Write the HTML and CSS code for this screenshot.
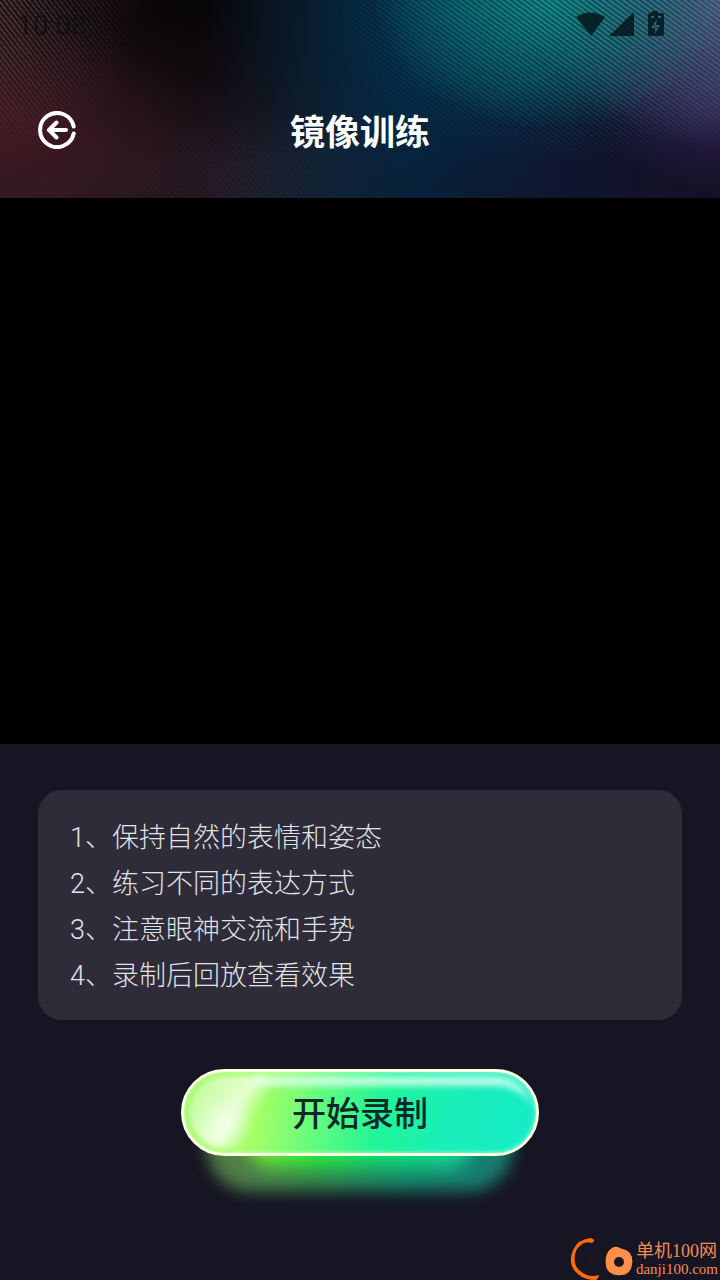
FILE: index.html
```html
<!DOCTYPE html>
<html lang="zh-CN">
<head>
    <meta charset="UTF-8">
    <meta name="viewport" content="width=device-width, initial-scale=1.0">
    <title>镜像训练</title>
    <link rel="stylesheet" href="styles.css">
</head>
<body>
    <header class="header">
        <div class="status-bar">
            <span>10:08</span>
            <svg class="status-icons" width="90" height="28" viewBox="0 0 90 28">
                <path d="M1 6Q15-3 30 6L16 25Z"/>
                <path d="M34 25L59 1V25Z"/>
                <path fill-rule="evenodd" d="M77 0h6v2h4q2 0 2 2v19q0 2-2 2H75q-2 0-2-2V4q0-2 2-2h2ZM82 8l-6 9h4v6l5-9h-4ZM76 5v2h3V5ZM83 5v2h3V5Z"/>
            </svg>
        </div>
        <div class="nav">
            <button class="back" aria-label="返回">
                <svg width="38" height="38" viewBox="0 0 38 38">
                    <path d="M35.700 15.500A17 17 0 1 0 35.700 22.500M28 19H12M18.500 11.500L11 19l7.500 7.500"/>
                </svg>
            </button>
            <h1>镜像训练</h1>
        </div>
    </header>

    <video class="preview"></video>

    <main class="content">
        <div class="tips">
            <p>1、保持自然的表情和姿态</p>
            <p>2、练习不同的表达方式</p>
            <p>3、注意眼神交流和手势</p>
            <p>4、录制后回放查看效果</p>
        </div>
        <button class="record">
            <span class="record-face"><span class="record-text">开始录制</span></span>
        </button>
    </main>

    <footer class="site">
        <svg width="64" height="42" viewBox="0 0 64 42">
            <circle cx="20" cy="21" r="14" fill="none" stroke="#1c1718" stroke-width="2"/>
            <path d="M15 21h10M20 16v10" stroke="#1c1718" stroke-width="2"/>
            <path d="M20 0Q7 1 2 12Q-4 27 7 36Q13 42 25 42Q28 40 28 37Q22 39 16 37Q6 33 4 25Q2 13 10 7Q14 3 20 5Q25 4 22 1Z" fill="#ff6a0a"/>
            <path d="M39 11Q44 6 50 10Q62 12 62 24Q61 38 48 38Q34 37 34 24Q34 15 39 11Z" fill="#ff8f4a" stroke="#17110f" stroke-width="1"/>
            <circle cx="48" cy="24" r="5" fill="#191820"/>
        </svg>
        <div>
            <p class="site-name">单机100网</p>
            <a href="#">danji100.com</a>
        </div>
    </footer>
</body>
</html>
```
FILE: styles.css
```css
* {
    box-sizing: border-box;
}

body {
    margin: 0;
    min-height: 100vh;
    display: flex;
    flex-direction: column;
    background: #161523;
    color: #fff;
    font-family: "Noto Sans CJK SC", sans-serif;
}

h1, p {
    margin: 0;
}

button {
    border: none;
    padding: 0;
    background: none;
    color: inherit;
    font-family: inherit;
    cursor: pointer;
}

.header {
    position: relative;
    isolation: isolate;
    padding-bottom: 44px;
    background:
        radial-gradient(ellipse 24% 65% at 76% 0%, rgba(10, 150, 140, 0.85), transparent),
        radial-gradient(ellipse 26% 75% at 100% 0%, rgba(92, 102, 146, 0.9), transparent),
        radial-gradient(ellipse 20% 50% at 102% 48%, rgba(52, 34, 84, 0.9), transparent),
        radial-gradient(ellipse 34% 90% at 62% 5%, rgba(0, 52, 84, 0.8), transparent),
        radial-gradient(ellipse 26% 60% at 2% 66%, rgba(72, 24, 34, 0.7), transparent),
        radial-gradient(ellipse 34% 85% at 27% 0%, rgba(5, 3, 4, 0.95), rgba(8, 5, 8, 0.6) 50%, transparent),
        linear-gradient(90deg, transparent 30%, rgba(4, 34, 60, 0.8) 57%, rgba(15, 20, 46, 0.9) 80%, rgba(20, 16, 38, 0.9)),
        linear-gradient(90deg, #2a1a20, #24161f 25%, #182030 48%, #181428);
}

/* fine diagonal lines over the glow */
.header::before,
.header::after {
    content: "";
    position: absolute;
    inset: 0;
    z-index: -1;
}

.header::before {
    background: repeating-linear-gradient(52deg, rgba(170, 135, 110, 0.35) 0 1px, transparent 2px 4px);
    mask-image:
        radial-gradient(ellipse 20% 80% at 0% 0%, #000, transparent),
        radial-gradient(ellipse 22% 45% at 35% 95%, rgba(0, 0, 0, 0.2), transparent);
}

.header::after {
    background: repeating-linear-gradient(36deg, rgba(0, 10, 30, 0.3) 0 1px, rgba(60, 200, 185, 0.32) 2px, rgba(0, 10, 30, 0.3) 4px);
    mask-image: radial-gradient(ellipse 38% 85% at 82% 0%, #000 20%, transparent);
}

.status-bar {
    height: 50px;
    padding: 0 55px 0 17px;
    display: flex;
    align-items: center;
    justify-content: space-between;
    color: rgba(14, 14, 16, 0.8);
    font: 28px Roboto, sans-serif;
}

.status-icons {
    fill: rgba(4, 22, 27, 0.85);
}

.nav {
    height: 104px;
    padding: 56px 38px 0;
    display: grid;
    grid-template-columns: 38px 1fr 38px;
    align-items: center;
}

.back {
    display: flex;
}

.back path {
    fill: none;
    stroke: #fff;
    stroke-width: 4;
    stroke-linecap: round;
    stroke-linejoin: round;
}

.nav h1 {
    font-size: 35px;
    line-height: 48px;
    text-align: center;
}

.preview {
    display: block;
    width: 100%;
    aspect-ratio: 120 / 91;
    background: #000;
}

.content {
    padding: 46px 38px 0;
    display: flex;
    flex-direction: column;
    align-items: center;
    gap: 49px;
}

.tips {
    width: 100%;
    padding: 25px 32px 21px;
    border-radius: 24px;
    background: #2e2c39;
    color: #e2e1e5;
    font-family: Roboto, "Noto Sans CJK SC", sans-serif;
    font-size: 27px;
    font-weight: 300;
    line-height: 46px;
}

.record {
    position: relative;
    isolation: isolate;
    width: 358px;
}

/* glow below the button */
.record::before,
.record::after {
    content: "";
    position: absolute;
    z-index: -1;
}

.record::before {
    inset: 32px 26px -35px;
    border-radius: 44px;
    background: linear-gradient(90deg, #587a46, #34854d 35%, #16856a 65%, #187a70);
    filter: blur(8px);
}

.record::after {
    inset: 32px 64px -12px;
    border-radius: 30px;
    background: linear-gradient(90deg, #88e32c, #2ee83c 28%, #0edb70 60%, #12d2a5);
    filter: blur(9px);
}

.record-face {
    position: relative;
    display: block;
    overflow: hidden;
    border: 3px solid #fbffe2;
    border-radius: 44px;
    background: linear-gradient(100deg, #a4f96c, #a5ff68 22%, #5dfb80 40%, #1ff598 56%, #19efb8 74%, #15ecc9);
    box-shadow: inset 0 0 5px rgba(220, 255, 210, 0.8);
}

.record-face::before,
.record-face::after {
    content: "";
    position: absolute;
}

/* left shine */
.record-face::before {
    inset: 4px auto 4px 5px;
    width: 110px;
    border-radius: 40px 0 0 40px;
    background:
        radial-gradient(ellipse 30px 30px at 36px 50px, rgba(255, 255, 255, 0.6), transparent),
        linear-gradient(120deg, rgba(215, 255, 190, 0.45), rgba(245, 255, 235, 0.8) 44%, transparent 60%);
    filter: blur(2px);
}

/* top shine */
.record-face::after {
    inset: 4px 4px 4px 70px;
    border-top: 10px solid rgba(225, 255, 242, 0.8);
    border-radius: 0 40px 40px 0;
    filter: blur(3px);
}

.record-text {
    position: relative;
    z-index: 1;
    display: block;
    padding-bottom: 2px;
    color: #0b2929;
    font-size: 34px;
    font-weight: 500;
    line-height: 79px;
}

.site {
    margin-top: auto;
    padding-right: 2px;
    display: flex;
    justify-content: flex-end;
    gap: 1px;
    color: #f58c55;
}

.site-name {
    padding-top: 2px;
    font: 18px/22px "Liberation Serif", "Noto Sans CJK SC", serif;
}

.site a {
    display: block;
    color: inherit;
    font: 15px/14px "Liberation Serif", serif;
    text-decoration: none;
}
```
